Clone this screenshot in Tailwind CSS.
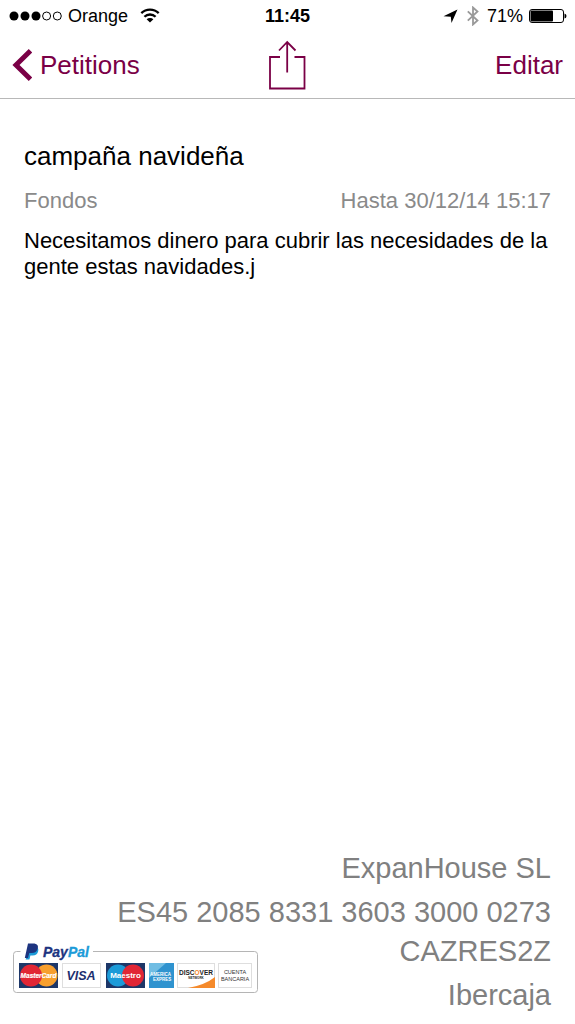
<!DOCTYPE html>
<html lang="es">
<head>
  <meta charset="UTF-8">
  <meta name="viewport" content="width=device-width, initial-scale=1.0">
  <title>campaña navideña</title>
  <script src="https://cdn.jsdelivr.net/npm/@tailwindcss/browser@4"></script>
</head>
<body class="flex min-h-screen flex-col bg-white font-['Liberation_Sans',Arial,sans-serif] text-black">
  <!-- Status bar -->
  <div class="grid h-8 grid-cols-3 items-center px-2 text-[18px] leading-8">
    <div class="flex items-center gap-1">
      <svg class="h-3 w-14" viewBox="0 0 56 12" aria-hidden="true">
        <circle cx="6" cy="6" r="4.500"/>
        <circle cx="17" cy="6" r="4.500"/>
        <circle cx="28" cy="6" r="4.500"/>
        <circle cx="38.600" cy="6" r="4" fill="none" stroke="#000"/>
        <circle cx="49.300" cy="6" r="4" fill="none" stroke="#000"/>
      </svg>
      <span>Orange</span>
      <svg class="ml-2 h-4 w-5" viewBox="0 0 20 16" fill="none" stroke="#000" stroke-width="2.300" aria-hidden="true">
        <path d="M1.300 5.200a12.500 12.500 0 0 1 17.400 0"/>
        <path d="M4.400 8.800a8 8 0 0 1 11.200 0"/>
        <path d="M10 14.500 6.600 11.300a4.800 4.800 0 0 1 6.800 0z" fill="#000" stroke="none"/>
      </svg>
    </div>
    <div class="text-center font-bold">11:45</div>
    <div class="flex items-center justify-end gap-2">
      <svg class="h-4 w-4" viewBox="0 0 16 16" aria-hidden="true">
        <path d="M14.500 1.500 8.500 15 7.800 8.700.5 8.200z"/>
      </svg>
      <svg class="h-5 w-3" viewBox="0 0 12 20" fill="none" stroke="#999" stroke-width="1.800" aria-hidden="true">
        <path d="M.8 5.300l9.700 9.200L6 18.500v-17l4.500 4-9.700 9.200"/>
      </svg>
      <span>71%</span>
      <svg class="-ml-1 h-4 w-10" viewBox="0 0 40 16" aria-hidden="true">
        <rect x="2.500" y="1.500" width="34" height="13" rx="2.500" fill="none" stroke="#000"/>
        <rect x="3.500" y="2.500" width="22.500" height="11" rx="1"/>
        <path d="M37.500 5.500q2 .5 2 2.500t-2 2.500z"/>
      </svg>
    </div>
  </div>

  <!-- Navigation -->
  <header class="grid h-[67px] grid-cols-3 items-center border-b border-[#b8b8b8] px-3 text-[26px] leading-8 text-[#7a0046]">
    <a href="#" class="flex items-center gap-2">
      <svg class="h-8 w-5" viewBox="0 0 20 32" fill="none" stroke="currentColor" stroke-width="5" aria-hidden="true">
        <path d="M18.500 1.800 4 16l14.500 14.200"/>
      </svg>
      Petitions
    </a>
    <button type="button" class="justify-self-center" aria-label="Compartir">
      <svg class="h-[50px] w-[38px]" viewBox="0 0 38 50" fill="none" stroke="currentColor" stroke-width="1.800" aria-hidden="true">
        <path d="M12 17H2v31.500h34.500V17h-10"/>
        <path d="M19.200 32.500V2M11 10.500 19.200 2l8.300 8.500"/>
      </svg>
    </button>
    <button type="button" class="justify-self-end">Editar</button>
  </header>

  <!-- Petition -->
  <main class="flex-1 px-6 pt-[41px]">
    <h1 class="text-[26px] leading-8">campaña navideña</h1>
    <div class="mt-4 flex justify-between text-[22px] leading-[26px] text-[#8a8a8a]">
      <span>Fondos</span>
      <span>Hasta 30/12/14 15:17</span>
    </div>
    <p class="mt-[14px] text-[22px] leading-[26px]">Necesitamos dinero para cubrir las necesidades de la gente estas navidades.j</p>
  </main>

  <!-- Bank details -->
  <footer class="pb-3 pl-3 pr-6 text-right text-[29px] text-[#808080]">
    <p class="leading-[44px]">ExpanHouse SL</p>
    <p class="leading-[44px]">ES45 2085 8331 3603 3000 0273</p>
    <div class="flex items-start justify-between">
      <button type="button" class="mt-1.5" aria-label="PayPal">
        <svg class="h-[54px] w-[246px]" viewBox="0 0 246 54" font-family="Liberation Sans, Arial, sans-serif">
          <path d="M8.500 11.500h-4a3 3 0 0 0-3 3v35a3 3 0 0 0 3 3h238a3 3 0 0 0 3-3v-35a3 3 0 0 0-3-3H81" fill="none" stroke="#b5b5b5"/>
          <!-- PayPal -->
          <path d="M17.500 7h7q2.500 1 1.600 4.500-1 4-5.500 4h-2.200l-1 4h-3.800z" fill="#1c9bd8"/>
          <path d="M16 3.500h6.500q4.500.8 3.200 5.300-1.200 4.200-6 4.200h-2.400L16 18h-3.200z" fill="#1d3480"/>
          <text x="31" y="17" font-size="14" font-weight="bold" font-style="italic" fill="#1d3480" stroke="#1d3480" stroke-width=".3">Pay<tspan fill="#1c9bd8" stroke="#1c9bd8">Pal</tspan></text>
          <!-- MasterCard -->
          <rect x="7" y="23" width="39" height="25" fill="#1d3768"/>
          <circle cx="34.500" cy="35.500" r="11" fill="#f79f2d"/>
          <circle cx="19" cy="35.500" r="11" fill="#e12635"/>
          <text x="26.500" y="38" text-anchor="middle" font-size="6.500" font-weight="bold" font-style="italic" fill="#fff" stroke="#fff" stroke-width=".2">MasterCard</text>
          <!-- Visa -->
          <rect x="50.500" y="23.500" width="38" height="24" fill="#fff" stroke="#dedede"/>
          <text x="69" y="40" text-anchor="middle" font-size="12.500" font-weight="bold" font-style="italic" fill="#1d2f6f">VISA</text>
          <!-- Maestro -->
          <rect x="94" y="23" width="39" height="25" fill="#1d3768"/>
          <circle cx="106" cy="35.500" r="11" fill="#1c9bd8"/>
          <circle cx="121" cy="35.500" r="11" fill="#e12635"/>
          <text x="113.500" y="38" text-anchor="middle" font-size="8" font-weight="bold" fill="#fff">Maestro</text>
          <!-- American Express -->
          <rect x="137" y="23" width="25" height="25" fill="#2f93cf"/>
          <path d="M137 23h17l-17 15z" fill="#70bde3"/>
          <text x="138" y="36" font-size="4.500" font-weight="bold" fill="#fff">AMERICA</text>
          <text x="141" y="41" font-size="4.500" font-weight="bold" fill="#fff">EXPRES</text>
          <!-- Discover -->
          <rect x="165.500" y="23.500" width="37" height="24" fill="#fff" stroke="#dedede"/>
          <path d="M203 37v11h-27q17-3 27-11z" fill="#f58a2b"/>
          <text x="184" y="35" text-anchor="middle" font-size="6.500" font-weight="bold" fill="#222">DISC<tspan fill="#f58a2b">O</tspan>VER</text>
          <text x="184" y="39" text-anchor="middle" font-size="3" font-weight="bold" fill="#222">NETWORK</text>
          <!-- Bank account -->
          <rect x="206.500" y="23.500" width="33" height="24" fill="#fff" stroke="#dedede"/>
          <text x="223" y="34" text-anchor="middle" font-size="5.500" fill="#333">CUENTA</text>
          <text x="223" y="41" text-anchor="middle" font-size="5.500" fill="#333">BANCARIA</text>
        </svg>
      </button>
      <div class="flex flex-col gap-[10px] leading-[34px]">
        <p>CAZRES2Z</p>
        <p>Ibercaja</p>
      </div>
    </div>
  </footer>
</body>
</html>
